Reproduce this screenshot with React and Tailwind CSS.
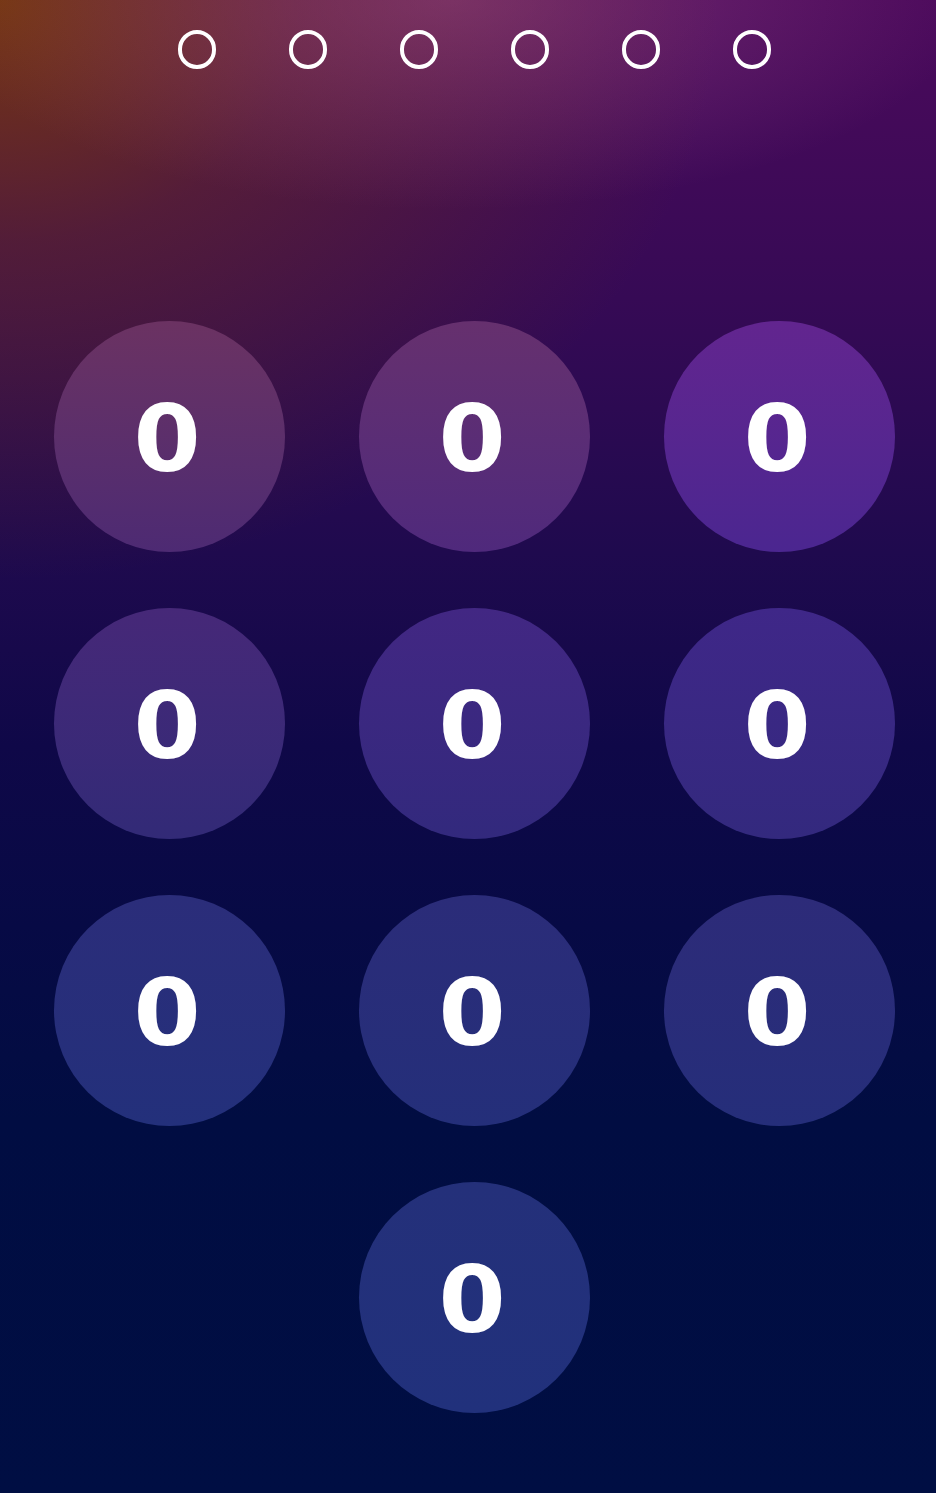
import React from "react";

const rows = [
  [
    "bg-linear-to-b from-[#6b3262] to-[#4d2a73]",
    "bg-linear-to-b from-[#66306e] to-[#4f297c]",
    "bg-linear-to-b from-[#62258f] to-[#4b2690]",
  ],
  [
    "bg-linear-to-b from-[#462878] to-[#322a77]",
    "bg-linear-to-b from-[#422783] to-[#32297d]",
    "bg-linear-to-b from-[#3f2788] to-[#33297e]",
  ],
  [
    "bg-linear-to-b from-[#2b2d7a] to-[#23307b]",
    "bg-linear-to-b from-[#2b2c79] to-[#242f7a]",
    "bg-linear-to-b from-[#2d2b79] to-[#252e7a]",
  ],
];

function Key({ cls }) {
  return (
    <button
      className={`flex h-[231px] w-[231px] items-center justify-center rounded-full text-[92px] font-bold leading-none text-white ${cls}`}
      style={{ fontFamily: '"DejaVu Sans", Verdana, sans-serif' }}
    >
      <span className="translate-x-[-2px] translate-y-[3px] scale-x-[1.05]">0</span>
    </button>
  );
}

export default function App() {
  return (
    <div className="min-h-[1493px] w-full bg-[radial-gradient(ellipse_520px_210px_at_48%_0%,rgba(185,100,150,0.36),rgba(185,100,150,0)),radial-gradient(ellipse_720px_580px_at_0%_0%,rgba(118,56,12,0.95),rgba(118,56,12,0.4)_42%,rgba(118,56,12,0)),linear-gradient(to_bottom,#4c0a5c_0%,#360a55_20%,#1f0a4e_37%,#0f0848_50%,#070a45_62%,#010d42_75%,#000e43_100%)] pl-[13px]">
      <div className="flex flex-col items-center pt-[30px]">
        <div className="flex gap-[73px]">
          {[0, 1, 2, 3, 4, 5].map((i) => (
            <div
              key={i}
              className="h-[39px] w-[38px] rounded-full border-4 border-white"
            />
          ))}
        </div>
        <div className="mt-[252px] grid grid-cols-[231px_231px_231px] gap-x-[74px] gap-y-[56px]">
          {rows.flat().map((c, i) => (
            <Key key={i} cls={c} />
          ))}
          <div />
          <Key cls="bg-linear-to-b from-[#24307a] to-[#21317c]" />
        </div>
      </div>
    </div>
  );
}
